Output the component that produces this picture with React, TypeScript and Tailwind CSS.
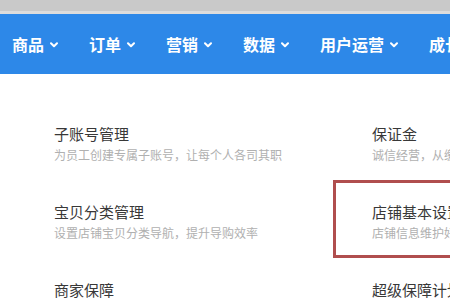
import React from 'react';

const navItems = ['商品', '订单', '营销', '数据', '用户运营', '成长'];

const cells = [
  { title: '子账号管理', desc: '为员工创建专属子账号，让每个人各司其职' },
  { title: '保证金', desc: '诚信经营，从缴纳保证金开始' },
  { title: '宝贝分类管理', desc: '设置店铺宝贝分类导航，提升导购效率' },
  { title: '店铺基本设置', desc: '店铺信息维护好，买家更放心', active: true },
  { title: '商家保障', desc: '提供多项保障服务，让买家放心购物' },
  { title: '超级保障计划', desc: '全面保障商家权益' },
];

function Chevron() {
  return (
    <svg className="ml-[6px] w-[8px] h-[6px] mt-[1px]" viewBox="0 0 8 6" fill="none">
      <path d="M1 1.2l3 3 3-3" stroke="white" strokeWidth="2" strokeLinecap="round" strokeLinejoin="round" />
    </svg>
  );
}

export default function App() {
  return (
    <div
      className="w-[450px] h-[300px] overflow-hidden bg-white"
      style={{ fontFamily: '"Noto Sans CJK SC", "Noto Sans", sans-serif' }}
    >
      {/* browser chrome strip */}
      <div className="h-[11px] bg-[#c9c9c9]" />
      <div className="h-[3px] bg-[#dcdcdc]" />

      {/* top nav */}
      <nav className="h-[60px] bg-[#2d88e8] flex items-center pl-[12px] gap-[31px] whitespace-nowrap">
        {navItems.map((item) => (
          <div key={item} className="flex items-center text-white text-[16px] font-bold leading-none">
            <span>{item}</span>
            <Chevron />
          </div>
        ))}
      </nav>

      {/* settings grid */}
      <div className="mt-[28px] ml-[15px] grid grid-cols-[318px_318px]">
        {cells.map((c) => (
          <div
            key={c.title}
            className={
              'h-[78px] pl-[36px] pt-[19px] border-[3px] whitespace-nowrap ' +
              (c.active ? 'border-[#b04e4e]' : 'border-transparent')
            }
          >
            <div className="text-[15px] leading-[20px] text-[#383838]">{c.title}</div>
            <div className="mt-[3px] text-[12px] leading-[16px] text-[#b0b0b0]">{c.desc}</div>
          </div>
        ))}
      </div>
    </div>
  );
}
